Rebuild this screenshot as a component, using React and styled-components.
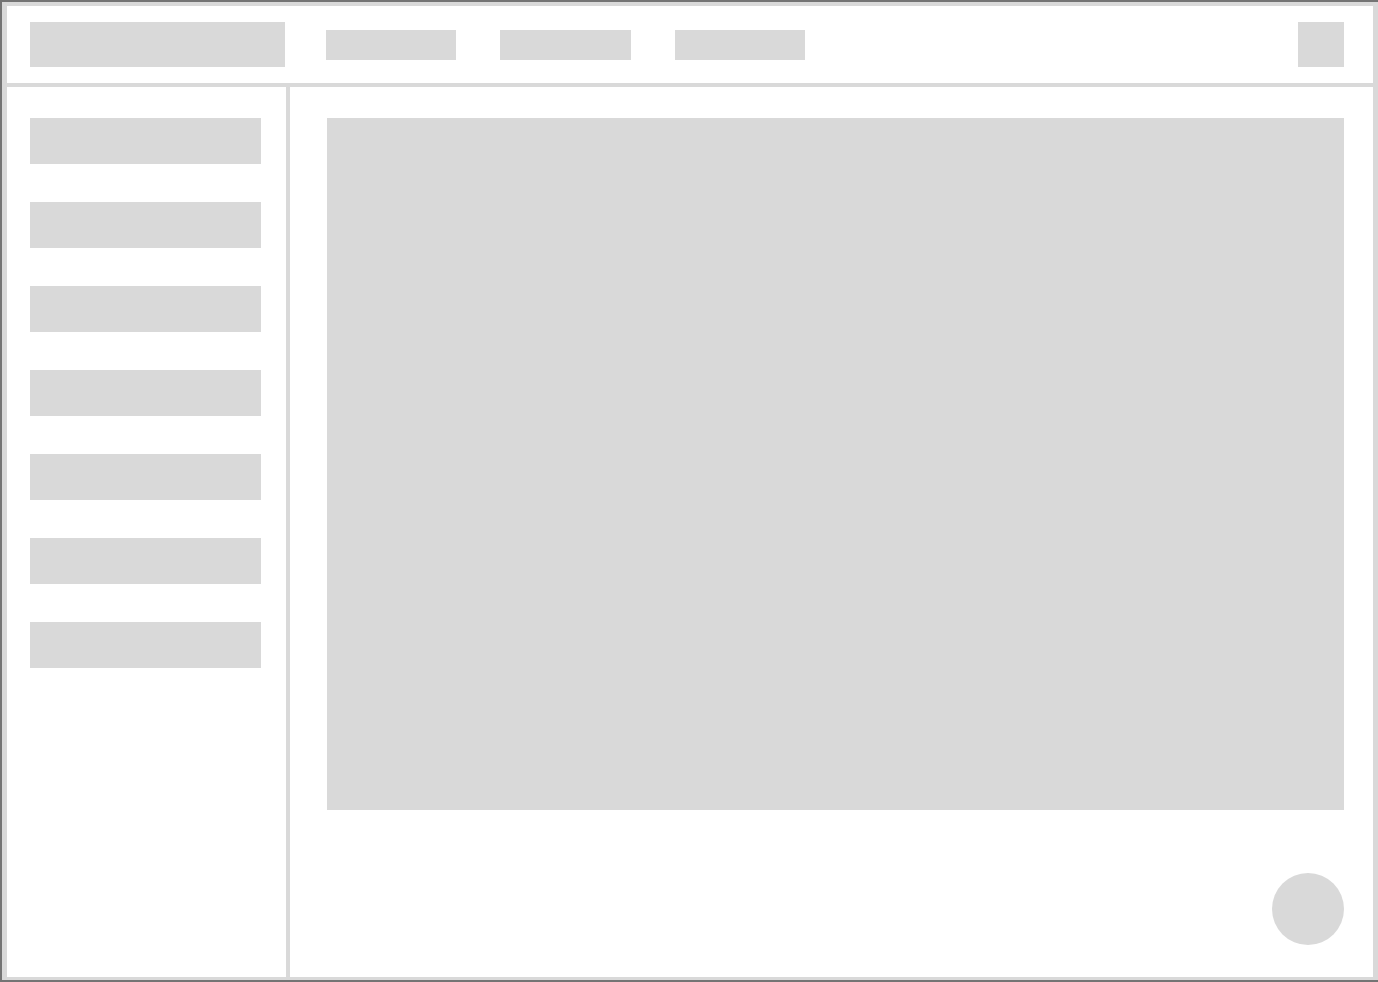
import React from 'react'
import styled, { createGlobalStyle } from 'styled-components'

const Global = createGlobalStyle`
  html, body {
    margin: 0;
    padding: 0;
    background: #fff;
    font-family: "Liberation Sans", Arial, sans-serif;
  }
  * { box-sizing: border-box; }
`

const Frame = styled.div`
  width: 1378px;
  height: 982px;
  border-top: 2px solid #747474;
  border-left: 2px solid #747474;
  border-bottom: 2px solid #747474;
  overflow: hidden;
`

const Inner = styled.div`
  height: 100%;
  border: 4px solid #d9d9d9;
  border-left-width: 5px;
  border-right-width: 5px;
  border-bottom-width: 3px;
  display: flex;
  flex-direction: column;
  background: #fff;
`

const Header = styled.header`
  height: 81px;
  flex-shrink: 0;
  display: flex;
  align-items: center;
  padding: 0 29px 0 23px;
  border-bottom: 4px solid #d9d9d9;
`

const Block = styled.div`
  background: #d9d9d9;
  width: ${p => p.$w}px;
  height: ${p => p.$h}px;
  flex-shrink: 0;
`

const Nav = styled.nav`
  display: flex;
  gap: 44px;
  margin-left: 41px;
`

const Spacer = styled.div`
  flex: 1;
`

const Body = styled.div`
  flex: 1;
  display: flex;
  min-height: 0;
`

const Sidebar = styled.aside`
  width: 283px;
  flex-shrink: 0;
  border-right: 4px solid #d9d9d9;
  padding: 31px 0 0 23px;
  display: flex;
  flex-direction: column;
  gap: 38px;
`

const Main = styled.main`
  flex: 1;
  padding: 31px 29px 32px 37px;
  display: flex;
  flex-direction: column;
`

const Canvas = styled.div`
  background: #d9d9d9;
  height: 692px;
`

const Footer = styled.div`
  flex: 1;
  display: flex;
  justify-content: flex-end;
  align-items: flex-end;
`

const Fab = styled.div`
  width: 72px;
  height: 72px;
  border-radius: 50%;
  background: #d9d9d9;
`

export default function App() {
  const items = [0, 1, 2, 3, 4, 5, 6]
  return (
    <>
      <Global />
      <Frame>
        <Inner>
          <Header>
            <Block $w={255} $h={45} />
            <Nav>
              <Block $w={130} $h={30} />
              <Block $w={131} $h={30} />
              <Block $w={130} $h={30} />
            </Nav>
            <Spacer />
            <Block $w={46} $h={45} />
          </Header>
          <Body>
            <Sidebar>
              {items.map(i => (
                <Block key={i} $w={231} $h={46} />
              ))}
            </Sidebar>
            <Main>
              <Canvas />
              <Footer>
                <Fab />
              </Footer>
            </Main>
          </Body>
        </Inner>
      </Frame>
    </>
  )
}
